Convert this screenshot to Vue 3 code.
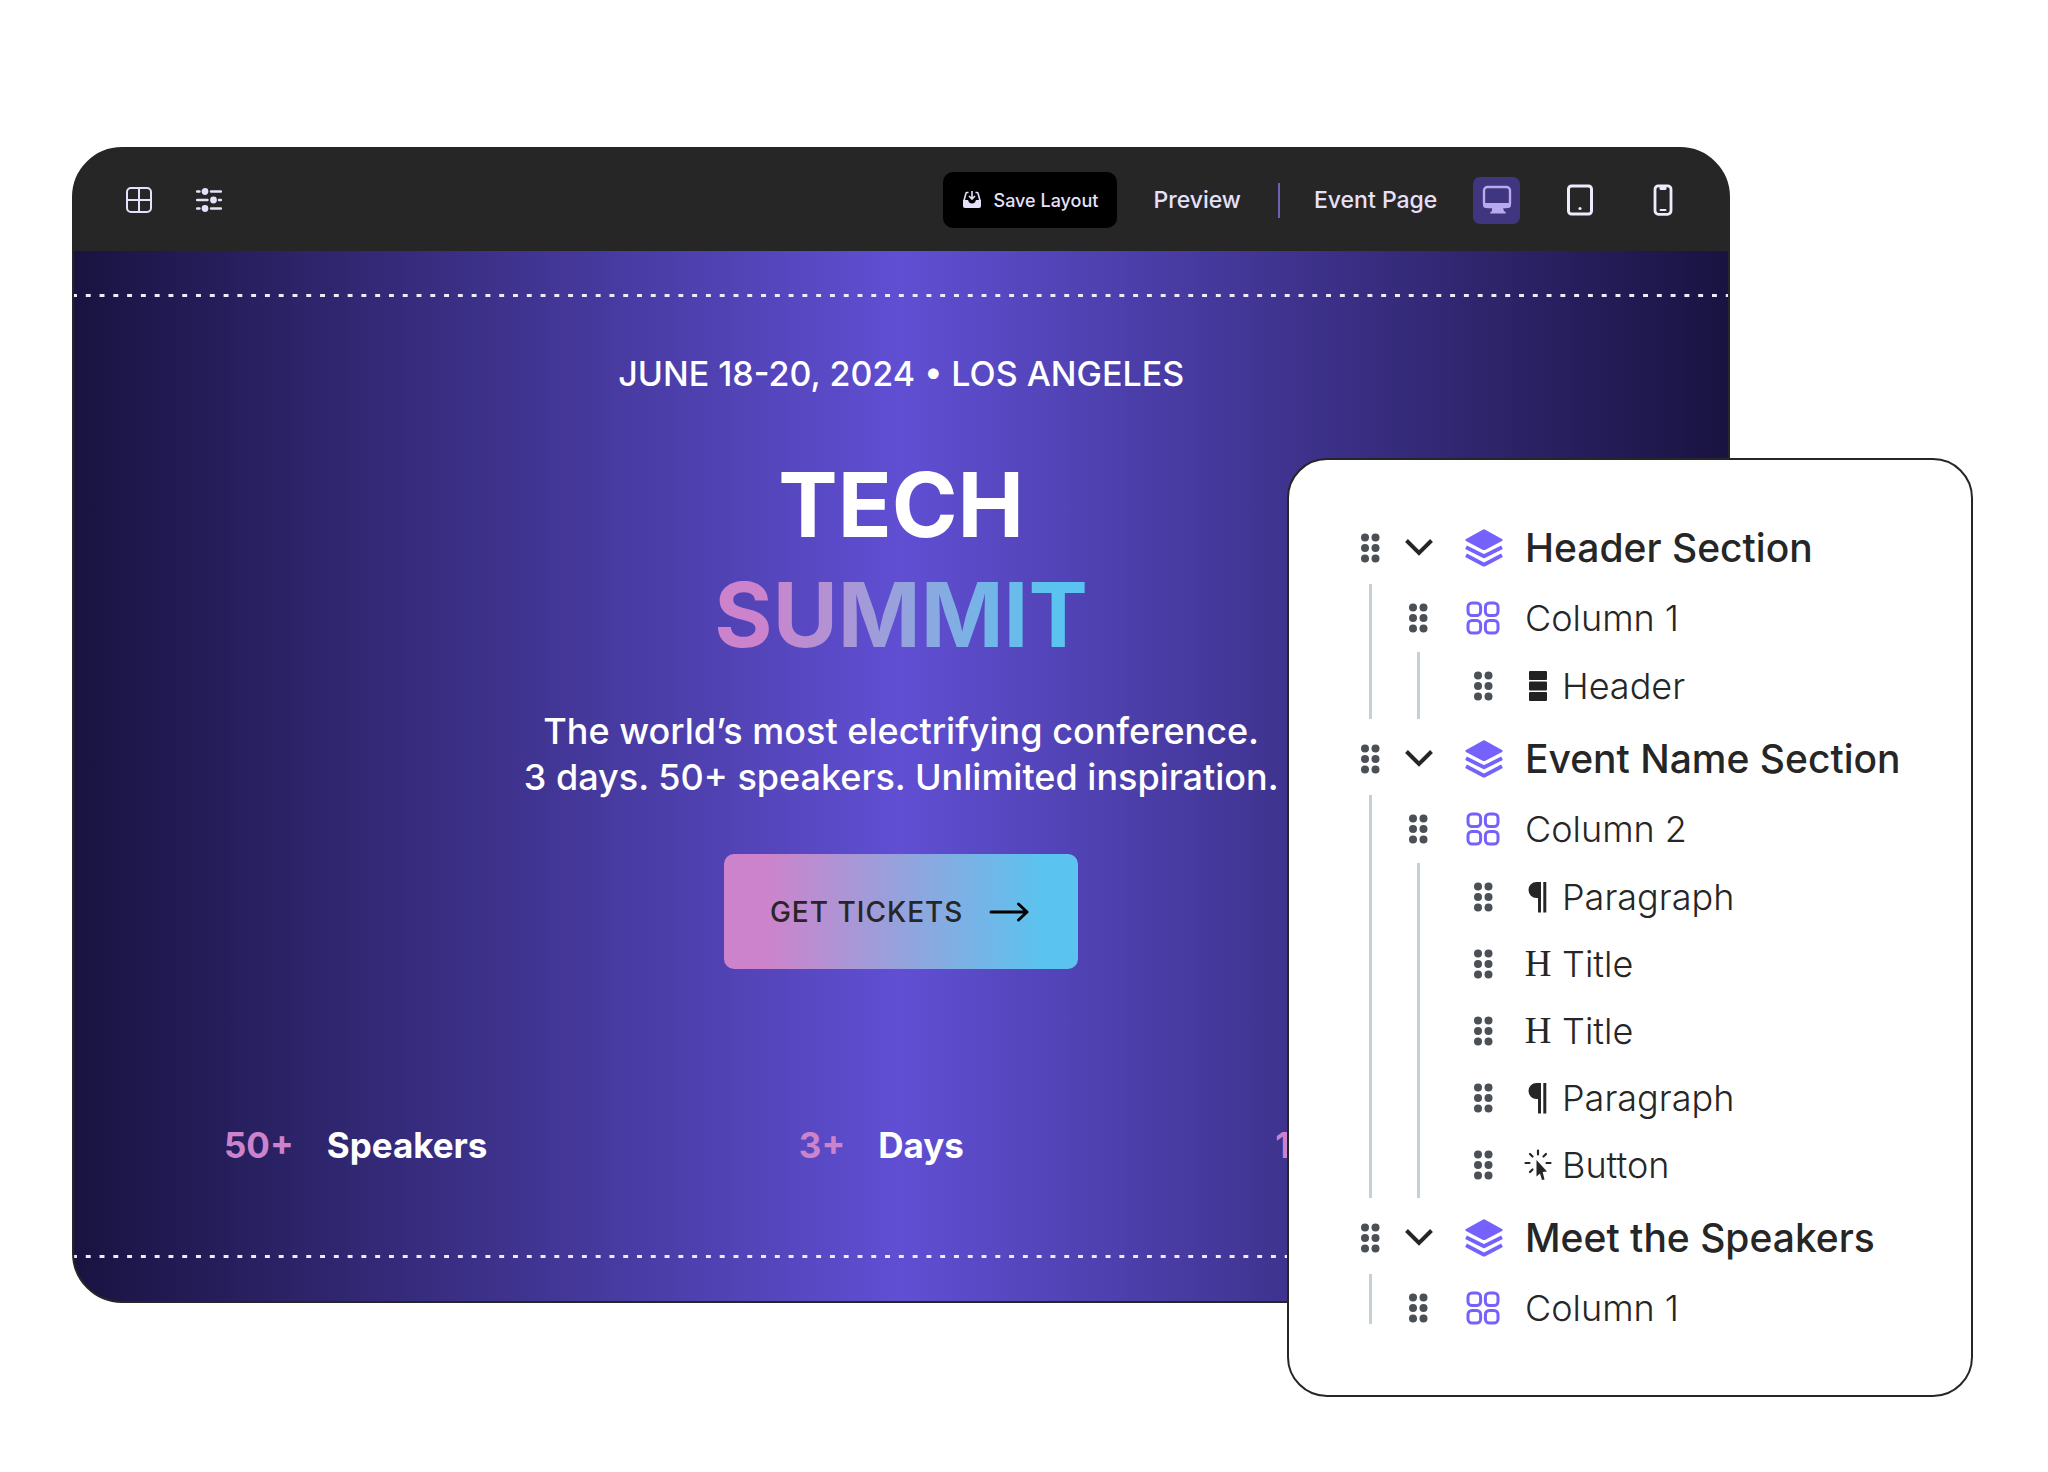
<script setup>
import { ref } from "vue";

const activeDevice = ref("desktop");

const devices = [
  { id: "desktop", label: "Desktop", size: 30 },
  { id: "tablet", label: "Tablet", size: 32 },
  { id: "phone", label: "Phone", size: 32 },
];

const stats = [
  { value: "50+", label: "Speakers" },
  { value: "3+", label: "Days" },
  { value: "1", label: "" },
];

const sections = ref([
  {
    name: "Header Section",
    open: true,
    columns: [{ name: "Column 1", items: [{ type: "block", name: "Header" }] }],
  },
  {
    name: "Event Name Section",
    open: true,
    columns: [
      {
        name: "Column 2",
        items: [
          { type: "paragraph", name: "Paragraph" },
          { type: "title", name: "Title" },
          { type: "title", name: "Title" },
          { type: "paragraph", name: "Paragraph" },
          { type: "button", name: "Button" },
        ],
      },
    ],
  },
  {
    name: "Meet the Speakers",
    open: true,
    columns: [{ name: "Column 1", items: [] }],
  },
]);

const toggle = (section) => {
  section.open = !section.open;
};
</script>

<template>
  <!-- shared icon shapes -->
  <svg class="sprite" aria-hidden="true">
    <symbol id="i-drag" viewBox="0 0 20 30">
      <g fill="#4a5055">
        <circle cx="5" cy="4.5" r="4" />
        <circle cx="15.5" cy="4.5" r="4" />
        <circle cx="5" cy="15" r="4" />
        <circle cx="15.5" cy="15" r="4" />
        <circle cx="5" cy="25.5" r="4" />
        <circle cx="15.5" cy="25.5" r="4" />
      </g>
    </symbol>
    <symbol id="i-layers" viewBox="0 0 38 38">
      <path
        d="M18.200 .4Q19 0 19.800 .4L37 9.900Q38.400 10.900 37 11.900L20.400 20.800Q19 21.400 17.600 20.800L1 11.900Q-.4 10.900 1 9.900Z"
        fill="#7562fc"
      />
      <g fill="none" stroke="#7562fc" stroke-width="3.8" stroke-linejoin="round">
        <path d="M1 18.300 19 27.300 37 18.300" />
        <path d="M1 26.300 19 35.700 37 26.300" />
      </g>
    </symbol>
    <symbol id="i-grid" viewBox="0 0 34 34">
      <g fill="none" stroke="#7562fc" stroke-width="3">
        <rect x="2" y="2" width="12.6" height="12.6" rx="4" />
        <rect x="19.4" y="2" width="12.6" height="12.6" rx="4" />
        <rect x="2" y="19.4" width="12.6" height="12.6" rx="4" />
        <rect x="19.4" y="19.4" width="12.6" height="12.6" rx="4" />
      </g>
    </symbol>
    <symbol id="i-block" viewBox="0 0 28 32">
      <g fill="#222">
        <rect x="5" y="1" width="18" height="8.900" rx="1" />
        <rect x="5" y="11.500" width="18" height="8.900" rx="1" />
        <rect x="5" y="22" width="18" height="8.900" rx="1" />
      </g>
    </symbol>
    <symbol id="i-paragraph" viewBox="0 0 28 32">
      <path d="M17 1v30.500h-3V17H12.500a8 8 0 0 1 0-16Z" fill="#262626" />
      <path d="M19.300 1h3v30.500h-3Z" fill="#262626" />
    </symbol>
    <symbol id="i-button" viewBox="0 0 28 32">
      <path
        d="M14 1.500v4M6 5 8.500 7.500M22 5 19.500 7.500M1.500 14h4M22.500 14h4M6 23 8.500 20.500"
        fill="none"
        stroke="#262626"
        stroke-width="2.200"
        stroke-linecap="round"
      />
      <path d="M12.500 11 23 22.500 18.700 23 20.500 30.500 18 31 16 24.500 12.500 27.500Z" fill="#262626" />
    </symbol>
    <symbol id="i-desktop" viewBox="0 0 30 30">
      <rect x="2" y="2" width="26" height="20" rx="3.500" fill="none" stroke="currentColor" stroke-width="2.400" />
      <path d="M1 18h28v2q0 3-3 3h-5l1 3q2 .5 2 2.500H8q0-2 2-2.500l-0-3H4q-3 0-3-3Z" fill="currentColor" />
    </symbol>
    <symbol id="i-tablet" viewBox="0 0 32 32">
      <rect x="4.500" y="2" width="23" height="28" rx="3" fill="none" stroke="currentColor" stroke-width="3" />
      <circle cx="16" cy="24.500" r="1.600" fill="currentColor" />
    </symbol>
    <symbol id="i-phone" viewBox="0 0 32 32">
      <rect x="8" y="1.800" width="16" height="28.500" rx="3.500" fill="none" stroke="currentColor" stroke-width="2.800" />
      <path d="M12.500 2h7v2.500q0 1.500-1.500 1.500h-4q-1.500 0-1.500-1.500Z" fill="currentColor" />
      <path d="M13.500 26h5" stroke="currentColor" stroke-width="2" stroke-linecap="round" />
    </symbol>
  </svg>

  <main class="page">
    <section class="builder">
      <header class="toolbar">
        <div class="tools">
          <button class="icon-btn" aria-label="Layout">
            <svg width="26" height="26" viewBox="0 0 26 26" fill="none" stroke="#e6e0fb" stroke-width="2">
              <rect x="1" y="1" width="24" height="24" rx="4" />
              <path d="M13 1v24M1 13h24" />
            </svg>
          </button>
          <button class="icon-btn" aria-label="Settings">
            <svg width="26" height="26" viewBox="0 0 26 26" fill="#e6e0fb" stroke="#e6e0fb" stroke-width="2.400" stroke-linecap="round">
              <path d="M1 4.500h2.500M15 4.500h10M1 13h10.500M23 13h2M1 21.500h2.500M15 21.500h10" />
              <circle cx="9" cy="4.500" r="2.200" />
              <circle cx="17.500" cy="13" r="2.200" />
              <circle cx="9" cy="21.500" r="2.200" />
            </svg>
          </button>
        </div>

        <button class="save">
          <svg width="20" height="18" viewBox="0 0 20 18">
            <path d="M6.500 1.500H5Q4.200 1.500 4 2.300L2 9.500M13.500 1.500H15q.8 0 1 .8l2 7.200" fill="none" stroke="#e6e0fb" stroke-width="1.600" />
            <path d="M10 0v8M7 5l3 3 3-3" fill="none" stroke="#e6e0fb" stroke-width="1.600" />
            <path d="M1 9h5q1 3.500 4 3.500T14 9h5v6q0 2-2 2H3q-2 0-2-2Z" fill="#e6e0fb" />
          </svg>
          Save Layout
        </button>
        <a class="link" href="#preview">Preview</a>
        <span class="divider"></span>
        <a class="link" href="#event">Event Page</a>
        <div class="devices">
          <button
            v-for="device in devices"
            :key="device.id"
            :class="['device', { active: activeDevice === device.id }]"
            :aria-label="device.label"
            @click="activeDevice = device.id"
          >
            <svg :width="device.size" :height="device.size"><use :href="`#i-${device.id}`" /></svg>
          </button>
        </div>
      </header>

      <div class="canvas">
        <div class="dashes"></div>
        <div class="hero">
          <p class="date">JUNE 18-20, 2024 • LOS ANGELES</p>
          <h1 class="title">TECH<span class="title-accent">SUMMIT</span></h1>
          <p class="lead">
            The world’s most electrifying conference.<br />
            3 days. 50+ speakers. Unlimited inspiration.
          </p>
          <button class="cta">
            GET TICKETS
            <svg width="40" height="20" viewBox="0 0 40 20" fill="none" stroke="#000" stroke-width="3" stroke-linecap="round" stroke-linejoin="round">
              <path d="M2 10h36M29.500 2l8.500 8-8.500 8" />
            </svg>
          </button>
        </div>
        <div class="stats">
          <div v-for="stat in stats" :key="stat.value" class="stat">
            <span class="stat-value">{{ stat.value }}</span>
            <span class="stat-label">{{ stat.label }}</span>
          </div>
        </div>
        <div class="dashes"></div>
      </div>
    </section>

    <aside class="panel">
      <ul class="tree">
        <li v-for="section in sections" :key="section.name" class="section">
          <div class="row section-row">
            <svg class="drag"><use href="#i-drag" /></svg>
            <button
              :class="['chevron', { closed: !section.open }]"
              :aria-label="`Toggle ${section.name}`"
              @click="toggle(section)"
            >
              <svg width="28" height="20" viewBox="0 0 28 20" fill="none" stroke="#262626" stroke-width="4">
                <path d="M1.500 2.500 14 15 26.500 2.500" />
              </svg>
            </button>
            <svg class="layers"><use href="#i-layers" /></svg>
            <span class="section-name">{{ section.name }}</span>
          </div>

          <ul v-if="section.open" class="columns">
            <li v-for="column in section.columns" :key="column.name">
              <div class="row column-row">
                <svg class="drag"><use href="#i-drag" /></svg>
                <svg class="grid-icon"><use href="#i-grid" /></svg>
                <span>{{ column.name }}</span>
              </div>
              <ul v-if="column.items.length" class="items">
                <li v-for="(item, i) in column.items" :key="i" class="row item-row">
                  <svg class="drag"><use href="#i-drag" /></svg>
                  <span v-if="item.type === 'title'" class="glyph">H</span>
                  <svg v-else class="item-icon"><use :href="`#i-${item.type}`" /></svg>
                  <span>{{ item.name }}</span>
                </li>
              </ul>
            </li>
          </ul>
        </li>
      </ul>
    </aside>
  </main>
</template>

<style>
body {
  margin: 0;
  background: #fff;
}
</style>

<style scoped>
.sprite {
  position: absolute;
  width: 0;
  height: 0;
}

.page {
  position: relative;
  box-sizing: border-box;
  min-height: 100vh;
  padding: 147px 72px;
  font-family: Inter, "Liberation Sans", sans-serif;
}

ul {
  list-style: none;
  margin: 0;
  padding: 0;
}

p,
h1 {
  margin: 0;
}

button {
  padding: 0;
  border: none;
  background: none;
  font-family: inherit;
  cursor: pointer;
}

svg {
  display: block;
  flex-shrink: 0;
}

.builder {
  box-sizing: border-box;
  width: 87.1%;
  border: 2px solid #262626;
  border-radius: 50px;
  overflow: hidden;
  background: #262626;
}

/* Toolbar */
.toolbar {
  display: flex;
  align-items: center;
  height: 102px;
  padding: 0 42px 0 52px;
}

.tools {
  display: flex;
  gap: 44px;
  margin-right: auto;
}

.save {
  display: flex;
  align-items: center;
  gap: 12px;
  height: 56px;
  padding: 0 19px;
  border-radius: 10px;
  background: #000;
  color: #e6e0fb;
  font-size: 18px;
  font-weight: 500;
}

.link {
  color: #e6e0fb;
  font-size: 23px;
  font-weight: 500;
  text-decoration: none;
}

.save + .link {
  margin-left: 36px;
}

.divider {
  width: 2px;
  height: 35px;
  margin: 0 34px 0 37px;
  background: #6f60b8;
}

.devices {
  display: flex;
  gap: 36px;
  margin-left: 36px;
}

.device {
  display: flex;
  align-items: center;
  justify-content: center;
  width: 47px;
  height: 47px;
  border-radius: 7px;
  color: #efebff;
}

.device.active {
  background: #40357f;
  color: #b7aaf0;
}

/* Page canvas */
.canvas {
  padding: 43px 0 43px;
  background: linear-gradient(90deg, #191341, #604fd3 50%, #191341);
}

.dashes {
  height: 3px;
  background: linear-gradient(90deg, #efebff 5px, transparent 5px);
  background-position: -2px 0;
  background-size: calc(100% / 120) 3px;
}

.hero {
  display: flex;
  flex-direction: column;
  align-items: center;
  padding-top: 54px;
  color: #fff;
  text-align: center;
}

.date {
  font-size: 34px;
  font-weight: 500;
  line-height: 46px;
}

.title {
  margin-top: 53px;
  font-size: 89px;
  font-weight: 700;
  line-height: 110px;
}

.title-accent {
  display: block;
  background: linear-gradient(90deg, #cd83cb 12%, #5bc3ef 90%);
  background-clip: text;
  color: transparent;
}

.lead {
  margin-top: 38px;
  font-size: 36px;
  font-weight: 500;
  line-height: 46px;
}

.cta {
  display: flex;
  align-items: center;
  gap: 26px;
  height: 115px;
  margin-top: 54px;
  padding: 0 49px 0 46px;
  border-radius: 10px;
  background: linear-gradient(90deg, #cd83cb 12%, #5bc3ef 90%);
  color: #262626;
  font-size: 28px;
  font-weight: 500;
  letter-spacing: 1px;
}

.stats {
  display: flex;
  gap: 20.7%;
  padding: 153px 0 87px 150px;
  font-size: 35px;
  font-weight: 700;
  line-height: 46px;
}

.stat {
  display: flex;
  gap: 33px;
}

.stat-value {
  color: #cd83cb;
}

.stat-label {
  color: #fff;
}

/* Structure panel floating over the canvas */
.panel {
  position: absolute;
  top: 458px;
  right: 75px;
  box-sizing: border-box;
  width: 686px;
  padding: 51px 40px 53px 71px;
  border: 2px solid #262626;
  border-radius: 40px;
  background: #fff;
  color: #262626;
  font-size: 36px;
  font-weight: 300;
}

.tree {
  display: flex;
  flex-direction: column;
  gap: 3px;
}

.row {
  display: flex;
  align-items: center;
  white-space: nowrap;
}

.section-row {
  height: 73px;
}

.section-name {
  font-size: 39px;
  font-weight: 500;
}

.column-row {
  height: 68px;
  padding-left: 48px;
}

.item-row {
  height: 67px;
  padding-left: 113px;
}

.drag {
  width: 20px;
  height: 30px;
}

.chevron {
  margin: 0 32px 0 25px;
}

.chevron.closed {
  transform: rotate(-90deg);
}

.layers {
  width: 38px;
  height: 38px;
  margin-right: 22px;
}

.grid-icon {
  width: 34px;
  height: 34px;
  margin: 0 25px 0 38px;
}

.glyph,
.item-icon {
  width: 28px;
  margin: 0 10px 0 31px;
}

.item-icon {
  height: 32px;
}

.glyph {
  font-family: "Liberation Serif", serif;
  font-size: 37px;
  font-weight: 400;
  text-align: center;
}

/* Nesting guides */
.columns,
.items {
  position: relative;
}

.columns::before,
.items::before {
  content: "";
  position: absolute;
  top: 0;
  bottom: 0;
  left: 9px;
  width: 3px;
  background: #c3d0d5;
}

.items::before {
  left: 57px;
}

.section:last-child .columns::before {
  bottom: 18px;
}
</style>
